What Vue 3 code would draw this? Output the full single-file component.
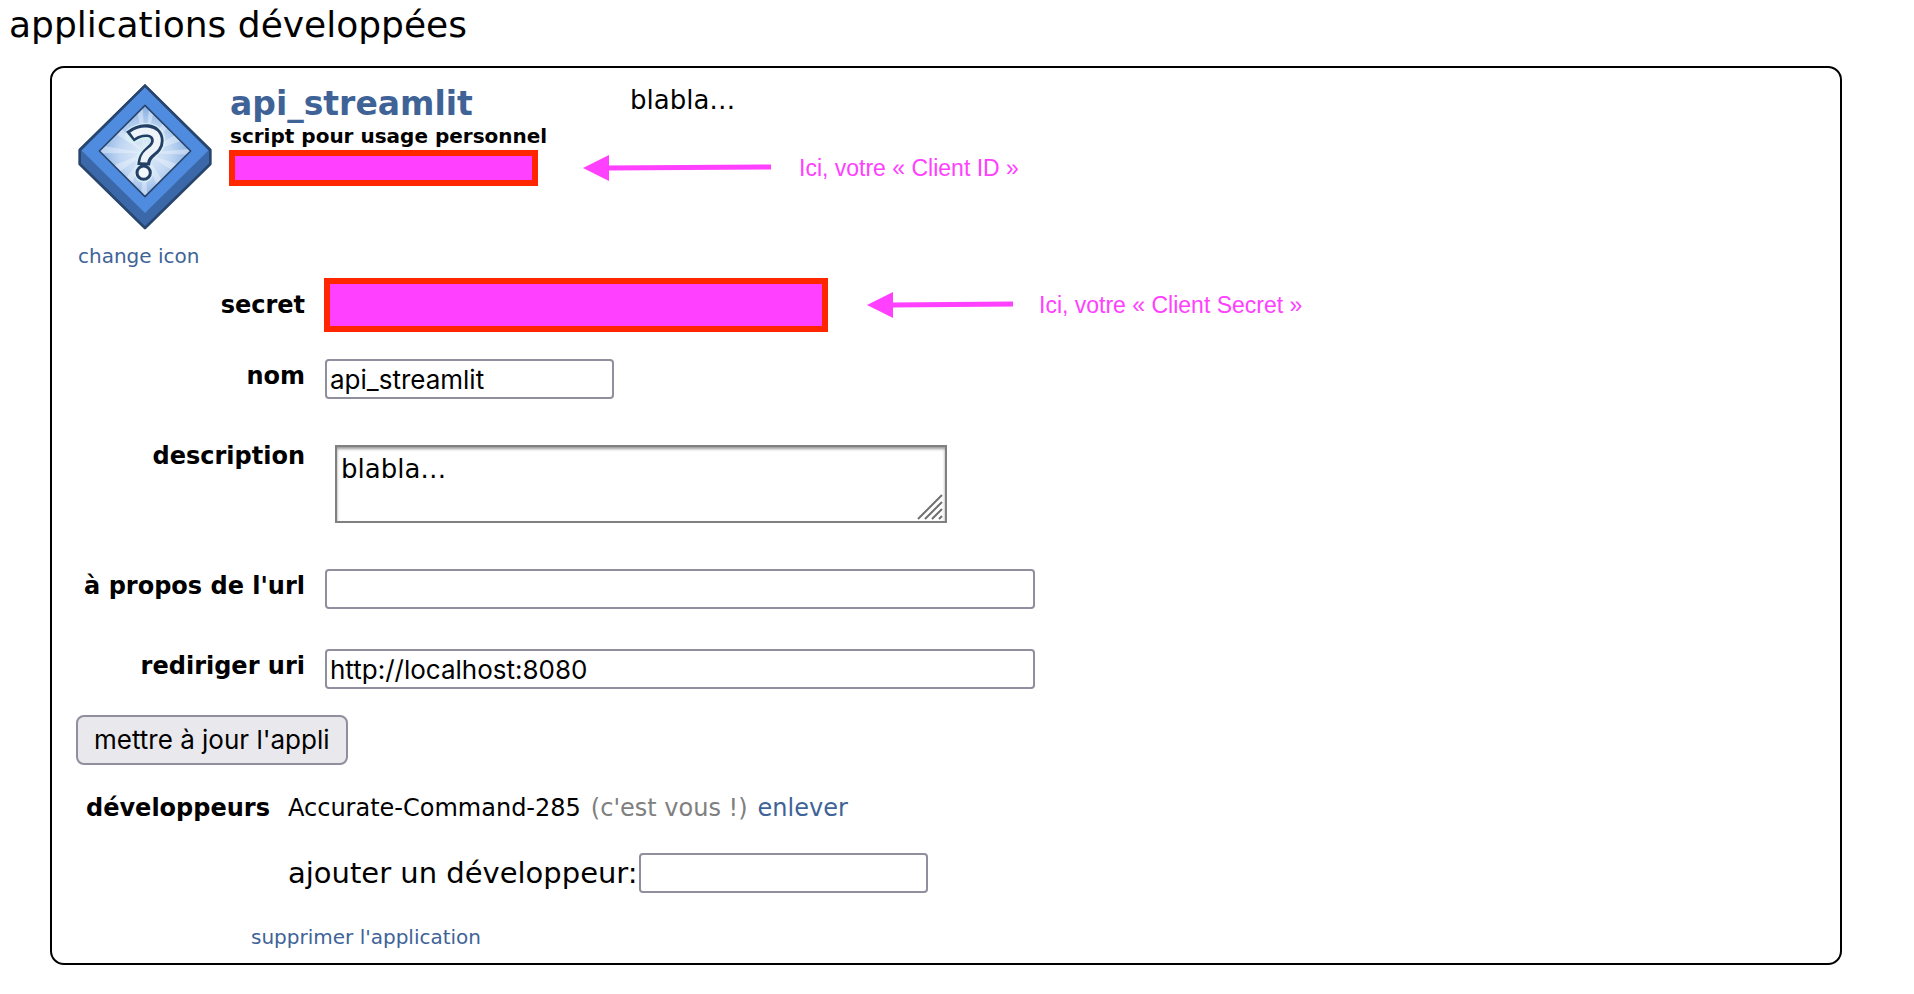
<script setup>
import { ref } from 'vue'

const name = ref('api_streamlit')
const description = ref('blabla…')
const aboutUrl = ref('')
const redirectUri = ref('http://localhost:8080')
const newDeveloper = ref('')
</script>

<template>
  <main class="page">
    <h1 class="heading">applications développées</h1>

    <section class="card">
      <header class="app-head">
        <div class="icon-col">
          <svg class="app-icon" viewBox="24 28 402 438" aria-hidden="true">
            <defs>
              <clipPath id="face"><path d="M225 92 362 229 225 366 88 229Z" /></clipPath>
              <radialGradient id="glow" cx="225" cy="235" r="130" gradientUnits="userSpaceOnUse">
                <stop offset="0" stop-color="#e4eefa" />
                <stop offset="0.6" stop-color="#bfd6f2" />
                <stop offset="1" stop-color="#8fb4e4" />
              </radialGradient>
            </defs>
            <path d="M225 34 421 226V268L225 460 29 268V226Z" fill="#3b68a8" stroke="#28456d" stroke-width="8" stroke-linejoin="round" />
            <path d="M225 36 416 227 225 415 34 227Z" fill="#4f8bde" />
            <path d="M225 33 419 225M225 33 31 225" fill="none" stroke="#28456d" stroke-width="8" stroke-linecap="round" />
            <path d="M225 92 362 229 225 366 88 229Z" fill="url(#glow)" />
            <g clip-path="url(#face)" fill="#eef5fc" opacity="0.45">
              <path d="M225 235 198 90 218 90ZM225 235 238 90 254 95ZM225 235 290 125 308 142ZM225 235 325 175 345 195ZM225 235 365 222 365 240ZM225 235 330 272 315 292ZM225 235 285 330 265 345ZM225 235 232 370 212 370ZM225 235 180 340 160 322ZM225 235 135 302 112 280ZM225 235 85 236 88 212ZM225 235 125 170 142 150Z" />
            </g>
            <path d="M225 92 362 229 225 366 88 229Z" fill="none" stroke="#28456d" stroke-width="5" stroke-linejoin="round" />
            <g fill="none" stroke-linejoin="round">
              <path d="M190 181C218 164 262 164 262 198C262 230 223 228 221 258" stroke="#d8f0f4" stroke-width="48" stroke-linecap="round" />
              <circle cx="221" cy="294" r="29" fill="#d8f0f4" />
              <path d="M180 186C212 160 262 160 262 198C262 230 223 228 221 272" stroke="#243f66" stroke-width="38" />
              <circle cx="221" cy="294" r="20" fill="#f2f7fc" stroke="#243f66" stroke-width="9" />
              <path d="M187 182C214 163 262 162 262 198C262 230 223 228 221 263" stroke="#eff4fb" stroke-width="21" />
            </g>
          </svg>
          <a href="#" class="link small">change icon</a>
        </div>

        <div class="app-info">
          <div class="app-top">
            <div class="app-names">
              <h2 class="app-title"><a href="#" class="link">api_streamlit</a></h2>
              <p class="app-kind">script pour usage personnel</p>
            </div>
            <p class="app-desc">blabla…</p>
          </div>
          <div class="note-row">
            <div class="mask mask-id"></div>
            <svg class="arrow arrow-id" viewBox="0 0 188 26" aria-hidden="true">
              <path d="M0 13 26 0V26Z" />
              <path d="M24 10.500 188 9.500V14.500L24 15.500Z" />
            </svg>
            <span class="note">Ici, votre « Client ID »</span>
          </div>
        </div>
      </header>

      <form class="form" @submit.prevent>
        <div class="row row-secret">
          <span class="label">secret</span>
          <div class="note-row">
            <div class="mask mask-secret"></div>
            <svg class="arrow arrow-secret" viewBox="0 0 146 26" aria-hidden="true">
              <path d="M0 13 26 0V26Z" />
              <path d="M24 10.500 146 9.500V14.500L24 15.500Z" />
            </svg>
            <span class="note">Ici, votre « Client Secret »</span>
          </div>
        </div>
        <div class="row">
          <label class="label" for="name">nom</label>
          <input id="name" v-model="name" class="field" type="text" />
        </div>
        <div class="row">
          <label class="label" for="description">description</label>
          <div class="area-wrap">
            <textarea id="description" v-model="description" class="area"></textarea>
            <svg class="grip" viewBox="0 0 26 26" aria-hidden="true">
              <path d="M1 25 25 1M8 25 25 8M15 25 25 15M22 25 25 22" />
            </svg>
          </div>
        </div>
        <div class="row">
          <label class="label" for="about">à propos de l'url</label>
          <input id="about" v-model="aboutUrl" class="field wide" type="text" />
        </div>
        <div class="row">
          <label class="label" for="redirect">rediriger uri</label>
          <input id="redirect" v-model="redirectUri" class="field wide" type="text" />
        </div>
        <button class="submit" type="submit">mettre à jour l'appli</button>
      </form>

      <div class="devs">
        <span class="dev-label">développeurs</span>
        <p class="dev-line">
          <span>Accurate-Command-285</span>
          <span class="muted">(c'est vous !)</span>
          <a href="#" class="link">enlever</a>
        </p>
        <div class="dev-add">
          <label for="new-dev">ajouter un développeur:</label>
          <input id="new-dev" v-model="newDeveloper" class="field" type="text" />
        </div>
      </div>

      <a href="#" class="link small remove">supprimer l'application</a>
    </section>
  </main>
</template>

<style>
body {
  margin: 0;
  background: #fff;
}
</style>

<style scoped>
.page {
  padding: 0 72px 28px 50px;
  font-family: Verdana, "DejaVu Sans", sans-serif;
  font-size: 24px;
  line-height: 28px;
  color: #000;
}
.heading {
  margin: 0 0 16px -41px;
  font-size: 36px;
  font-weight: 400;
  line-height: 50px;
}
.card {
  border: 2px solid #000;
  border-radius: 14px;
  padding: 16px 24px 14px;
}
.link {
  color: #406397;
  text-decoration: none;
}
.small {
  font-size: 20px;
  line-height: 24px;
}
.app-head {
  display: flex;
  gap: 17px;
  margin-left: 2px;
}
.icon-col {
  display: flex;
  flex: none;
  flex-direction: column;
  gap: 14px;
  width: 134px;
}
.app-icon {
  display: block;
  width: 134px;
  height: 146px;
}
.app-info {
  flex: 1;
}
.app-top {
  display: flex;
}
.app-names {
  box-sizing: border-box;
  width: 401px;
  padding: 2px 0 2px 1px;
}
.app-title {
  margin: 0 0 2px;
  font-size: 33px;
  line-height: 36px;
}
.app-kind {
  margin: 0;
  font-size: 20px;
  font-weight: 700;
  line-height: 24px;
}
.app-desc {
  margin: 0;
  font-size: 26px;
  line-height: 32px;
}
.note-row {
  display: flex;
  align-items: center;
}
.mask {
  box-sizing: border-box;
  border: 6px solid #ff2600;
  background: #ff40ff;
}
.mask-id {
  width: 309px;
  height: 36px;
}
.mask-secret {
  width: 504px;
  height: 54px;
}
.arrow {
  height: 26px;
  fill: #ff40ff;
}
.arrow-id {
  width: 188px;
  margin: 0 28px 0 45px;
}
.arrow-secret {
  width: 146px;
  margin: 0 26px 0 39px;
}
.note {
  font-family: Helvetica, "Liberation Sans", sans-serif;
  font-size: 23px;
  color: #ff40ff;
}
.form {
  display: flex;
  flex-direction: column;
  align-items: flex-start;
  gap: 40px;
  margin-top: 10px;
}
.row {
  display: grid;
  grid-template-columns: 229px auto;
  column-gap: 20px;
  align-items: start;
}
.row-secret {
  column-gap: 19px;
  align-items: center;
  margin-bottom: -13px;
}
.label {
  font-weight: 700;
  text-align: right;
}
.row:not(.row-secret) .label {
  padding-top: 3px;
}
.field {
  box-sizing: border-box;
  width: 289px;
  height: 40px;
  margin: 0;
  padding: 2px 3px;
  border: 2px solid #8f8f9d;
  border-radius: 4px;
  background: #fff;
  font-family: Inter, sans-serif;
  font-size: 26px;
  color: #000;
}
.wide {
  width: 710px;
}
.area-wrap {
  position: relative;
  width: 612px;
  margin: 6px 10px;
}
.area {
  display: block;
  box-sizing: border-box;
  width: 100%;
  height: 78px;
  margin: 0;
  padding: 6px 4px;
  border: 2px solid #808080;
  border-radius: 0;
  box-shadow: inset 0 2px 3px rgba(0, 0, 0, 0.4);
  font-family: inherit;
  font-size: 26px;
  line-height: 32px;
  color: #000;
  resize: none;
}
.grip {
  position: absolute;
  right: 4px;
  bottom: 3px;
  width: 26px;
  height: 26px;
  fill: none;
  stroke: #707070;
  stroke-width: 2;
}
.submit {
  height: 50px;
  margin-top: -14px;
  padding: 0 16px 2px;
  border: 2px solid #8f8f9d;
  border-radius: 8px;
  background: #e9e9ed;
  font-family: Inter, sans-serif;
  font-size: 26px;
  color: #000;
}
.devs {
  display: grid;
  grid-template-columns: 202px auto;
  row-gap: 31px;
  margin: 29px 0 32px 10px;
}
.dev-label {
  font-weight: 700;
}
.dev-line {
  display: flex;
  gap: 10px;
  margin: 0;
}
.muted {
  color: #808080;
}
.dev-add {
  display: flex;
  grid-column: 2;
  align-items: center;
  gap: 1px;
  font-size: 29px;
}
.remove {
  display: block;
  width: fit-content;
  margin-left: 175px;
}
</style>
